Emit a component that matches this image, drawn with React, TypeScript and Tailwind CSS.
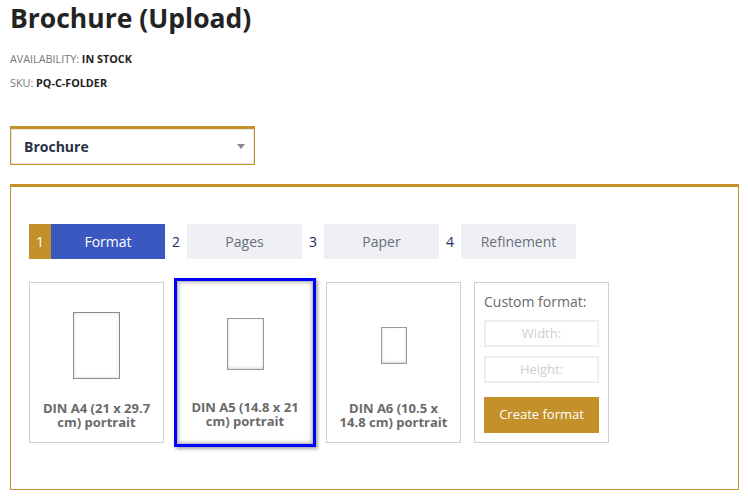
import React from "react";

const font = { fontFamily: '"Open Sans", "Liberation Sans", sans-serif' };

function Tab({ n, label, active, first }: { n: string; label: string; active?: boolean; first?: boolean }) {
  return (
    <div className="flex h-[35px]">
      <div
        className={
          active
            ? "w-[22px] flex items-center justify-center bg-[#c3902a] text-white text-[14px]"
            : "w-[22px] flex items-center justify-center text-[#1f2a5c] text-[14px]"
        }
      >
        {n}
      </div>
      <div
        className={
          active
            ? "flex items-center justify-center bg-[#3a58bf] text-white text-[14px] " + (first ? "w-[114px]" : "w-[115px]")
            : "flex items-center justify-center bg-[#eef0f5] text-[#6b6d78] text-[14px] w-[115px]"
        }
      >
        {label}
      </div>
    </div>
  );
}

function Sheet({ w, h, dark }: { w: number; h: number; dark?: boolean }) {
  return (
    <div
      className={
        dark
          ? "bg-white border border-[#8a8a8a] shadow-[inset_0_0_4px_rgba(0,0,0,0.12)]"
          : "bg-white border border-[#9a9a9a] shadow-[inset_0_-1px_3px_rgba(0,0,0,0.18)]"
      }
      style={{ width: w, height: h }}
    />
  );
}

function CardBody({ w, h, line, dark, pt }: { w: number; h: number; line: string; dark?: boolean; pt: string }) {
  return (
    <div className={"flex flex-col items-center " + pt}>
      <div className="h-[66px] flex items-center justify-center">
        <Sheet w={w} h={h} dark={dark} />
      </div>
      <div className="mt-[23px] px-[9px] text-center text-[13px] leading-[14px] font-bold text-[#6a6a6a]">
        {line}
      </div>
    </div>
  );
}

export default function App() {
  return (
    <div className="px-[10px] bg-white min-h-[498px]" style={font}>
      <h1 className="text-[26.5px] leading-[36px] font-bold text-[#232323]">Brochure (Upload)</h1>
      <div className="mt-[11px] text-[10.8px] leading-[24px] text-[#777]">
        AVAILABILITY: <span className="font-bold text-[#222]">IN STOCK</span>
      </div>
      <div className="text-[10.8px] leading-[24px] text-[#777]">
        SKU: <span className="font-bold text-[#222]">PQ-C-FOLDER</span>
      </div>

      <div className="mt-[31px] w-[245px] h-[39px] border-t-[3px] border-x border-b border-[#c3902a] bg-white shadow-[inset_0_0_0_1px_#e6e6e6] flex items-center justify-between pl-[13px] pr-[9px]">
        <span className="text-[14px] font-bold text-[#2a2f45]">Brochure</span>
        <svg width="8" height="5" viewBox="0 0 8 5">
          <path d="M0 0 H8 L4 5 Z" fill="#8a8a8a" />
        </svg>
      </div>

      <div className="mt-[19px] w-[729px] border-t-[3px] border-x border-b border-[#c3902a] pt-[37px] pl-[18px] pb-[42px]">
        <div className="flex">
          <Tab n="1" label="Format" active first />
          <Tab n="2" label="Pages" />
          <Tab n="3" label="Paper" />
          <Tab n="4" label="Refinement" />
        </div>

        <div className="mt-[19px] flex items-start h-[169px]">
          <div className="mt-[4px] w-[135px] h-[161px] border border-[#cfcfcf]">
            <CardBody w={47} h={67} line="DIN A4 (21 x 29.7 cm) portrait" dark pt="pt-[29px]" />
          </div>

          <div className="ml-[10px] w-[142px] h-[169px] border-[3px] border-[#0000ff] shadow-[2px_2px_3px_rgba(0,0,0,0.35)]">
            <div className="w-full h-full border border-[#c0c0c0] shadow-[inset_0_0_4px_rgba(0,0,0,0.35)]">
              <CardBody w={37} h={52} line="DIN A5 (14.8 x 21 cm) portrait" pt="pt-[29px]" />
            </div>
          </div>

          <div className="ml-[10px] mt-[4px] w-[135px] h-[161px] border border-[#cfcfcf]">
            <CardBody w={26} h={37} line="DIN A6 (10.5 x 14.8 cm) portrait" pt="pt-[29px]" />
          </div>

          <div className="ml-[13px] mt-[4px] w-[135px] h-[161px] border border-[#cfcfcf] pt-[9px] px-[9px]">
            <div className="text-[14px] leading-[19px] text-[#6a6a6a]">Custom format:</div>
            <div className="mt-[9px] w-[115px] h-[27px] border-2 border-[#eeeeee] flex items-center justify-center text-[13px] text-[#cfcfcf]">
              Width:
            </div>
            <div className="mt-[9px] w-[115px] h-[27px] border-2 border-[#eeeeee] flex items-center justify-center text-[13px] text-[#cfcfcf]">
              Height:
            </div>
            <div className="mt-[14px] w-[115px] h-[36px] bg-[#c3902a] flex items-center justify-center text-[13px] text-white">
              Create format
            </div>
          </div>
        </div>
      </div>
    </div>
  );
}
